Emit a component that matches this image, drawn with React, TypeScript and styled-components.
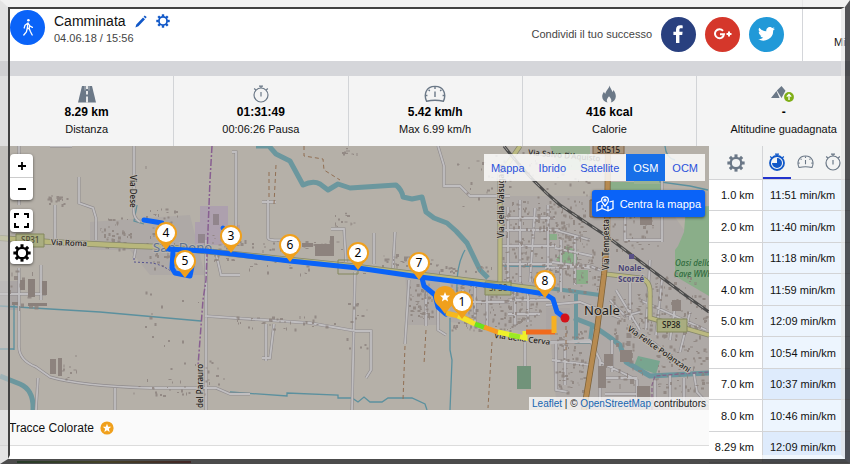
import React from "react";
import styled, { createGlobalStyle } from "styled-components";

const BLUE = "#0a63f8";
const ORANGE = "#f0a01c";

const GlobalStyle = createGlobalStyle`
  * { box-sizing: border-box; }
  body { margin: 0; background: #fff; color: #111; font-family: "Liberation Sans", Arial, sans-serif; font-size: 11px; line-height: 14px; }
  button { font: inherit; color: inherit; border: 0; padding: 0; background: none; cursor: pointer; }
  svg { display: block; flex: none; }
`;

const Page = styled.div`
  position: relative;
  display: flex;
  flex-direction: column;
  height: 100vh;
  min-height: 440px;
  overflow: hidden;
`;

const FrameOuter = styled.div`
  position: absolute;
  inset: 0;
  pointer-events: none;
  border-style: solid;
  border-width: 7px 5px 5px 8px;
  border-color: rgba(236, 236, 236, 0.75) rgba(40, 40, 44, 0.8) rgba(40, 40, 40, 0.83) rgba(205, 205, 205, 0.55);
`;

const FrameInner = styled.div`
  height: 100%;
  border-style: solid;
  border-width: 2px 4px 4px 2px;
  border-color: #414141 rgba(228, 228, 228, 0.6) rgba(255, 255, 255, 0.6) #414141;
`;

const Header = styled.header`
  display: flex;
  align-items: stretch;
  flex: none;
  height: 61px;
  padding-left: 10px;
`;

const Sport = styled.div`
  width: 35px;
  height: 35px;
  margin-top: 10px;
  border-radius: 50%;
  background: ${BLUE};
  display: grid;
  place-items: center;
`;

const Heading = styled.div`
  flex: 1;
  padding: 13px 0 0 9px;
`;

const TitleRow = styled.div`
  display: flex;
  align-items: center;
  gap: 9px;
`;

const Title = styled.h1`
  margin: 0;
  font-size: 14px;
  line-height: 16px;
  font-weight: 400;
`;

const IconButton = styled.button`
  display: grid;
  place-items: center;
  color: #1158c8;
`;

const DateLine = styled.div`
  margin-top: 2px;
  color: #444;
`;

const Share = styled.div`
  display: flex;
  align-items: center;
  gap: 9px;
  padding: 7px 18px 0 0;
  color: #444;
`;

const Round = styled.button<{ $bg: string }>`
  width: 35px;
  height: 35px;
  border-radius: 50%;
  background: ${(p) => p.$bg};
  display: grid;
  place-items: center;
  color: #fff;
`;

const HeaderEnd = styled.div`
  width: 48px;
  flex: none;
  overflow: hidden;
  border-left: 1px solid #d4d6da;
  padding: 35px 0 0 31px;
  white-space: nowrap;
`;

const Band = styled.div`
  flex: none;
  height: 15px;
  background: #d5d6da;
`;

const Stats = styled.section`
  flex: none;
  display: grid;
  grid-template-columns: repeat(5, 20.5%);
  height: 70px;
  background: #f4f4f4;
`;

const Stat = styled.div`
  display: flex;
  flex-direction: column;
  align-items: center;
  padding-top: 8px;
  border-right: 1px solid #d2d4d7;
  white-space: nowrap;
`;

const StatIcon = styled.div`
  display: grid;
  place-items: center;
  height: 20px;
  color: #6b7887;
`;

const StatValue = styled.strong`
  font-size: 12px;
  line-height: 16px;
  color: #000;
`;

const StatLabel = styled.span`
  margin-top: 2px;
  line-height: 14px;
`;

const Body = styled.main`
  flex: 1;
  min-height: 0;
  display: flex;
`;

const MapColumn = styled.div`
  flex: 1;
  min-width: 0;
  display: flex;
  flex-direction: column;
`;

const MapArea = styled.div`
  position: relative;
  flex: 1;
  min-height: 0;
  overflow: hidden;
  background: #b5b0a8;
`;

const MapSvg = styled.svg`
  width: 100%;
  height: 100%;
`;

const LeftControls = styled.div`
  position: absolute;
  left: 10px;
  top: 8px;
  display: flex;
  flex-direction: column;
  gap: 9px;
`;

const Control = styled.div`
  border-radius: 4px;
  background: #fff;
  box-shadow: 0 1px 3px rgba(0, 0, 0, 0.55);
  overflow: hidden;
`;

const ControlButton = styled.button`
  display: grid;
  place-items: center;
  width: 23px;
  height: 23px;
  color: #000;
  & + & { border-top: 1px solid #ccc; }
`;

const RightControls = styled.div`
  position: absolute;
  top: 8px;
  right: 4px;
  display: flex;
  flex-direction: column;
  align-items: flex-end;
  gap: 9px;
`;

const Layers = styled.div`
  display: flex;
  height: 27px;
  background: rgba(255, 255, 255, 0.82);
`;

const Layer = styled.button<{ $active?: boolean }>`
  padding: 0 7px;
  color: ${(p) => (p.$active ? "#fff" : "#2a52dc")};
  background: ${(p) => (p.$active ? "#176fe8" : "transparent")};
`;

const Center = styled.button`
  display: flex;
  align-items: center;
  gap: 6px;
  height: 27px;
  padding: 0 4px;
  border-radius: 3px;
  background: ${BLUE};
  color: #fff;
  box-shadow: 0 1px 3px rgba(0, 0, 0, 0.5);
  white-space: nowrap;
`;

const Attribution = styled.div`
  position: absolute;
  right: 0;
  bottom: 0;
  padding: 0 3px;
  background: rgba(255, 255, 255, 0.75);
  font-size: 10px;
  line-height: 13px;
  color: #222;
  a { color: #1565b0; text-decoration: none; }
`;

const Tracks = styled.div`
  flex: none;
  display: flex;
  align-items: center;
  gap: 6px;
  height: 36px;
  padding-left: 9px;
  border-bottom: 1px solid #dcdcdc;
  background: #fafafa;
  font-size: 12px;
`;

const LegendRow = styled.div`
  flex: none;
  display: flex;
  height: 18px;
  padding: 15px 20px 0 17px;
`;

const LegendBar = styled.div`
  width: 174px;
  height: 2px;
  background: linear-gradient(90deg, #1f9a2c, #d9c928, #c22020);
`;

const Side = styled.aside`
  flex: none;
  width: 141px;
  overflow: hidden;
`;

const Splits = styled.table`
  width: 141px;
  table-layout: fixed;
  border-collapse: separate;
  border-spacing: 0;
  th, td { padding: 0; border-bottom: 1px solid #d3d4d6; }
  thead tr { height: 34px; background: #f3f4f4; }
  tbody tr { height: 31px; }
  tbody tr:nth-child(even) { height: 32px; }
`;

const GearHead = styled.th`
  width: 53px;
  color: #6b7887;
  svg { margin: 0 auto; }
`;

const ModeHead = styled.th`
  border-left: 1px solid #d3d4d6;
`;

const Modes = styled.div`
  display: flex;
`;

const Mode = styled.button<{ $active?: boolean }>`
  display: grid;
  place-items: center;
  flex: none;
  width: 28px;
  height: 33px;
  color: ${(p) => (p.$active ? "#1158c8" : "#6b7887")};
  border-bottom: 2px solid ${(p) => (p.$active ? "#2233cc" : "transparent")};
`;

const Km = styled.th`
  font-weight: 400;
  text-align: right;
  && { padding-right: 8px; }
`;

const Pace = styled.td<{ $fast?: boolean }>`
  border-left: 1px solid #d3d4d6;
  background: ${(p) => (p.$fast ? "#deebfc" : "#edf5fe")};
  white-space: nowrap;
  && { padding-left: 7px; }
`;

/* ---------- icons ---------- */

const Gear = ({ size = 14 }: { size?: number }) => (
  <svg width={size} height={size} viewBox="0 0 20 20" fill="none" stroke="currentColor">
    <circle cx="10" cy="10" r="5.8" strokeWidth="2.5" />
    {[0, 45, 90, 135, 180, 225, 270, 315].map((a) => (
      <path key={a} d="M10 0.4V3.8" strokeWidth="3.4" transform={`rotate(${a} 10 10)`} />
    ))}
  </svg>
);

const Walker = () => (
  <svg width="14" height="19" viewBox="0 0 14 19" fill="none" stroke="#fff" strokeWidth="1.3" strokeLinecap="round" strokeLinejoin="round">
    <circle cx="7.4" cy="2.2" r="1.3" fill="#fff" stroke="none" />
    <path d="M7 5L4 7.2L3.2 10M7 5L9 8L11.4 9.4M7 5L6.2 10.5M8.6 7.5L8.2 10.5M6.2 10.5L5.4 13.8L2.8 17M8.2 10.5L9.4 13.5L11.2 17M6.2 10.5H8.2" />
  </svg>
);

const Pencil = () => (
  <svg width="12" height="13" viewBox="0 0 12 13" fill="currentColor">
    <path d="M9.7 0.4L11.7 2.1L10.6 3.5L8.6 1.8ZM8 2.5L10 4.2L3.4 11.2L0.4 12.6L1.3 9.5Z" />
  </svg>
);

const Stopwatch = ({ size = 18, filled }: { size?: number; filled?: boolean }) => (
  <svg width={size} height={size} viewBox="0 0 18 18" fill="none" stroke="currentColor" strokeWidth="1.2">
    <circle cx="9" cy="10" r="7" strokeWidth={filled ? 1.8 : 1.2} />
    <path d="M7 1.2H11M9 1.2V3M2.2 3.5L3.8 5M15.8 3.5L14.2 5" />
    {filled ? <path d="M9 10V5A5 5 0 1 1 4 10Z" fill="currentColor" stroke="none" /> : <path d="M9 7V11.4" />}
  </svg>
);

const Gauge = ({ size = 22 }: { size?: number }) => (
  <svg width={size} height={size * 0.8} viewBox="0 0 22 17.6" fill="none" stroke="currentColor" strokeWidth="1.4">
    <path d="M2.6 16.2C-0.4 10 1.6 1.4 11 1.4S22.4 10 19.4 16.2Q11 14.4 2.6 16.2Z" />
    <path d="M11 6.6V12M11 2V4M4.6 4.8L5.8 6M17.4 4.8L16.2 6M1.6 10.5H3.4M20.4 10.5H18.6" />
  </svg>
);

const Road = () => (
  <svg width="18" height="18" viewBox="0 0 18 18">
    <path d="M4 1H14L18 17.5H0Z" fill="#6b7887" />
    <path d="M9 1V4M9 6V9.5M9 11.5V17.5" stroke="#f4f4f4" strokeWidth="1.8" />
    <path d="M7 0.5V5.5M11 0.5V5.5" stroke="#f4f4f4" strokeWidth="0.5" />
  </svg>
);

const Flame = () => (
  <svg width="14" height="18" viewBox="0 0 14 18">
    <path d="M7.6 0.5C8.2 3.5 10 4.6 10.4 7C10.9 6.6 11.2 5.8 11.3 5C13 7 14 9.2 13.8 11.8C13.6 14.6 11.6 16.8 8.8 17.5C10 15.8 9.4 13.7 7 11.2C5 13.4 4.1 15.6 5.5 17.5C2.4 16.8 0.3 14.7 0.2 11.8C0.1 9.7 1.1 8 2 6.8C2.2 7.8 2.7 8.5 3.4 8.8C3.6 5.8 6.9 3.8 7.6 0.5Z" fill="#6b7887" />
  </svg>
);

const Mountains = () => (
  <svg width="26" height="18" viewBox="0 0 26 18">
    <path d="M0 13L5.5 6L8.6 13ZM5.9 5.4L10.5 1L14.5 5.8L10.5 13Z" fill="#6b7887" />
    <circle cx="18" cy="12" r="4.9" fill="#7fae16" />
    <path d="M18 15V9.5M15.8 11.6L18 9.4L20.2 11.6" stroke="#fff" strokeWidth="1.3" fill="none" />
  </svg>
);

const Facebook = () => (
  <svg width="11" height="18" viewBox="0 0 11 18">
    <path d="M3 18V10H0.4V6.8H3V4.5C3 1.7 4.7 0.2 7.2 0.2C8.4 0.2 9.4 0.3 9.7 0.4V3.3H8C6.7 3.3 6.4 3.9 6.4 4.9V6.8H9.6L9.2 10H6.4V18Z" fill="#fff" />
  </svg>
);

const GooglePlus = () => (
  <svg width="18" height="12" viewBox="0 0 18 12" fill="none" stroke="#fff" strokeWidth="2">
    <path d="M9 2.8A4.5 4.5 0 1 0 10 6.2H6M12.5 6H17.5M15 3.5V8.5" />
  </svg>
);

const Twitter = () => (
  <svg width="17" height="14" viewBox="0 0 24 20">
    <path d="M24 2.4a9.8 9.8 0 0 1-2.8.8A4.9 4.9 0 0 0 23.3.4a9.9 9.9 0 0 1-3.1 1.2A4.9 4.9 0 0 0 11.8 6.1 14 14 0 0 1 1.7.9a4.9 4.9 0 0 0 1.5 6.6A4.9 4.9 0 0 1 1 6.9a4.9 4.9 0 0 0 3.9 4.9 4.9 4.9 0 0 1-2.2.1 4.9 4.9 0 0 0 4.600 3.400A9.900 9.900 0 0 1 0 17.300 14 14 0 0 0 21.500 4.900 10 10 0 0 0 24 2.400z" fill="#fff" />
  </svg>
);

const STAR = "M0 -5L1.4 -1.6L5 -1.4L2.2 1L3.1 4.6L0 2.6L-3.1 4.6L-2.2 1L-5 -1.4L-1.4 -1.6Z";

const StarBadge = () => (
  <svg width="14" height="14" viewBox="-7 -7 14 14">
    <circle r="6.6" fill={ORANGE} />
    <path d={STAR} fill="#fff" transform="scale(0.85)" />
  </svg>
);

const Plus = () => (
  <svg width="10" height="10" viewBox="0 0 10 10" stroke="#000" strokeWidth="1.8"><path d="M1 5H9M5 1V9" /></svg>
);
const Minus = () => (
  <svg width="10" height="10" viewBox="0 0 10 10" stroke="#000" strokeWidth="1.8"><path d="M1 5H9" /></svg>
);
const Expand = () => (
  <svg width="15" height="15" viewBox="0 0 15 15" fill="none" stroke="#000" strokeWidth="2">
    <path d="M1 5V1H5M10 1H14V5M14 10V14H10M5 14H1V10" />
  </svg>
);
const MapPinIcon = () => (
  <svg width="18" height="16" viewBox="0 0 18 16" fill="none" stroke="#fff" strokeWidth="1.3">
    <path d="M5 5L1 7V14.8L6 12.5L12 14.8L17 12.5V5L13.5 6M6 9V12.5M12 10V14.8" />
    <path d="M9 10C6.5 7 5.6 5.8 5.6 4.2A3.4 3.4 0 0 1 12.4 4.2C12.4 5.8 11.5 7 9 10Z" />
    <circle cx="9" cy="4.2" r="1" />
  </svg>
);

/* ---------- map drawing ---------- */

function scatter(seed: number, x0: number, y0: number, w: number, h: number, n: number, max = 3) {
  let s = seed * 7919;
  const rnd = () => ((s = (s * 16807) % 2147483647) / 2147483647);
  rnd();
  let d = "";
  for (let i = 0; i < n; i++) {
    const x = Math.round((x0 + rnd() * w) * 2) / 2;
    const y = Math.round((y0 + rnd() * h) * 2) / 2;
    const bw = 1 + Math.round(rnd() * (max - 1));
    const bh = 1 + Math.round(rnd() * (max - 1));
    d += `M${x} ${y}h${bw}v${bh}h${-bw}z`;
  }
  return d;
}

const HOUSES = [
  scatter(11, 502, 200, 80, 84, 210), scatter(23, 508, 284, 32, 44, 70), scatter(35, 450, 278, 60, 52, 140),
  scatter(47, 550, 236, 48, 60, 90), scatter(59, 555, 330, 30, 62, 80), scatter(61, 608, 200, 50, 50, 50),
  scatter(73, 612, 292, 40, 44, 70), scatter(85, 652, 270, 56, 58, 90), scatter(97, 600, 332, 50, 62, 30, 5),
  scatter(101, 655, 330, 54, 62, 100), scatter(113, 535, 205, 60, 30, 30, 4), scatter(121, 495, 150, 95, 50, 40),
  scatter(137, 100, 215, 30, 34, 45), scatter(149, 150, 208, 34, 60, 50), scatter(151, 212, 232, 25, 30, 30),
  scatter(163, 235, 240, 110, 10, 30), scatter(171, 246, 262, 120, 12, 20), scatter(183, 382, 254, 50, 12, 40),
  scatter(197, 408, 282, 24, 38, 60), scatter(203, 130, 378, 80, 18, 26), scatter(211, 165, 360, 60, 28, 14),
  scatter(223, 235, 315, 100, 14, 36), scatter(235, 10, 268, 25, 40, 14, 5), scatter(241, 335, 212, 20, 16, 14),
  scatter(257, 47, 195, 20, 9, 16), scatter(263, 60, 355, 16, 25, 10), scatter(271, 345, 300, 22, 60, 14),
  scatter(283, 452, 160, 46, 46, 18), scatter(297, 335, 148, 26, 8, 10), scatter(301, 130, 290, 70, 60, 9),
  scatter(311, 145, 150, 10, 180, 9), scatter(331, 418, 264, 80, 8, 26),
].join("");

const MINOR = [
  "M134 146V205Q132 218 140 222", "M79 177V203L93 208L96 218V240", "M55 205V240", "M236 240V152L232 152",
  "M19 146V205M50 146H72", "M268 200V238Q268 241 285 240", "M262 202H276", "M331 229H344L346 262",
  "M374 233V264M395 232L393 268", "M438 146L444 166V186H460L470 196H510", "M19 268V345Q18 360 36 367L50 377Q80 386 150 388H216L230 394H250",
  "M38 378L36 410M115 388V410", "M0 294H46M41 265V300", "M206 240V410", "M216 253L221 275L240 275", "M205 316L310 323L356 331H371V370L366 378",
  "M266 324V361M274 324L270 358H262", "M355 272L352 410", "M409 280L405 344M426 286V326", "M438 297V330L446 335",
  "M134 258L136 247", "M508 207V282M500 218H555M503 230H560M500 246H556M503 264H552M520 200V282M535 208L530 282M548 205V282",
  "M555 230L590 240M555 248L592 256M552 262L590 268M561 240V292M575 236V285", "M545 268L590 266L600 270",
  "M515 290V326M528 292V322M508 300H550M508 314H540M475 285V326M487 286V327M463 290V320M450 302H510",
  "M525 333V366", "M550 342H590M556 343V390L568 392M565 345V385M552 360L590 365", "M590 340L600 360V408",
  "M600 362L637 380V404M612 340V372M600 378H637M605 394H640", "M610 300L625 316L640 312M616 290L640 330M630 280V320",
  "M625 190V240H662M662 176V242M662 205H686", "M650 260L646 330M662 280L656 335M676 300L670 340M690 312L680 352M640 300L706 330",
  "M694 374L697 392L709 405M650 340L690 372M655 380V408M670 375V408M684 378V408", "M546 305L580 302L620 318",
].join("");

const RIVER = "M256 146H269L276 154L290 161L303 185Q313 180 320 184L328 190L338 184L350 188L396 185Q402 190 403 197L412 199L422 197L426 212L434 218L447 223L456 231L467 243L480 270L488 278";
const MAIN_ROAD = "M0 238L50 242L135 246L165 247L350 266L545 290";
const SIDE_ROADS = "M500 282V175L520 146M605 274L640 278Q650 280 650 292V318L709 335";
const SR515 = "M608 146L607 240L604 275L597 330L584 410";
const RAIL = "M504 146Q530 180 560 205Q585 222 605 235L685 295L709 312";

const Pin = ({ x, y, n }: { x: number; y: number; n?: string }) => (
  <g transform={`translate(${x} ${y})`}>
    <path d="M-10 4L0 17L10 4Z" fill={ORANGE} />
    <circle r="11" fill={ORANGE} />
    {n ? <circle r="9" fill="#fff" /> : <path d={STAR} fill="#fff" />}
    {n && (
      <text y="4" textAnchor="middle" fontFamily="Noto Sans, sans-serif" fontSize="12" fill="#000">{n}</text>
    )}
  </g>
);

const halo = { stroke: "#b9b4ad", strokeWidth: 2, paintOrder: "stroke" as const };

const MapDrawing = () => (
  <MapSvg viewBox="0 146 709 264" preserveAspectRatio="xMinYMin slice" aria-label="Mappa" role="img" fill="none">
    <rect y="146" width="709" height="264" fill="#b5b0a8" />
    <g fill="#aea9a6">
      <path d="M500 196H660L709 265V410H590L556 400L550 334L450 322V278L500 280Z" />
      <path d="M90 222L190 215L205 275H150L130 250H90ZM405 270H440V325H408Z" />
    </g>
    <path d="M200 206H228V225H240V245H195V222H200Z" fill="#ada0ae" />
    <path d="M213 214H219V225H213ZM198 234H205V243H198Z" fill="#91858c" />
    <g fill="#8aae89">
      <path d="M709 206L686 208L684 232L678 246L675 250V276L709 296ZM561 252L567 246L577 251V264H562L556 260Z" />
      <path d="M517 366H531V389H517Z" fill="#71937a" />
      <path d="M638 356L660 361L656 374L634 366Z" fill="#78a58f" />
      <path d="M610 182H662V196H610ZM574 270H588V284H574ZM548 234H557V240H548Z" />
      <path d="M550 146H590V170H560ZM634 170H662V184H634Z" fill="#9ab294" />
    </g>
    <path d="M0 281H20V310H0ZM546 308H570V330H546Z" fill="#aaa5a4" />

    <g stroke="#6b979e" strokeWidth="5" strokeLinejoin="round">
      <path d={RIVER} />
      <path d="M0 376L20 384Q34 390 33 410" />
      <path d="M574 318L592 325L608 336L620 345L626 362L650 376L709 373" />
      <path d="M576 294V342H590L592 326M548 288L600 295" strokeWidth="4" />
    </g>
    <g stroke="#5b909e" strokeWidth="1.3">
      <path d="M0 306L100 312L201 321M14 304V350M0 349H14M230 392L287 396V393L338 395V398H352L358 402L364 397L370 402H382L388 398H412L425 404L427 410" />
      <path d="M450 318V350L452 360L450 410M465 250Q456 265 457 292M504 266L575 267M660 172V182L690 186L708 190M137 205L134 221L144 224M665 146Q666 158 675 160" />
    </g>

    <path d={MINOR} stroke="#8f8b8d" strokeWidth="3" />
    <path d={MINOR} stroke="#c0bec0" strokeWidth="1.8" />
    <path d={HOUSES} fill="#8b817c" opacity="0.8" />
    <path d="M50 359H56V374H50ZM58 358H62V376H58ZM315 244H330V236H334V256H315ZM302 243H313V247H302ZM604 354H613V366H604ZM620 350H632V362H620ZM637 386H650V400H637ZM672 300H681V311H672ZM598 366H606V388H598ZM640 212H652V225H640Z" fill="#8d837e" />
    <path d="M20 280H25V290H20ZM28 279H35V297H28ZM42 281H47V295H42ZM28 303H47V306H28ZM12 302H18V305H12Z" fill="#8a807b" />

    <path d={MAIN_ROAD} stroke="#85866a" strokeWidth="6" />
    <path d={MAIN_ROAD} stroke="#b8b77c" strokeWidth="4.6" />
    <path d={SIDE_ROADS} stroke="#85866a" strokeWidth="5" />
    <path d={SIDE_ROADS} stroke="#bbb980" strokeWidth="3.6" />
    <path d="M550 343L590 340" stroke="#bab8b9" strokeWidth="2.5" />
    <path d={SR515} stroke="#7d6138" strokeWidth="6" />
    <path d={SR515} stroke="#b78b51" strokeWidth="4.5" />
    <path d={RAIL} stroke="#4b4b4b" strokeWidth="3" />
    <path d={RAIL} stroke="#a5a29e" strokeWidth="1" strokeDasharray="6 6" />
    <path d="M212 146L210 180L206 280L203 300L198 366" stroke="#885f91" strokeWidth="1.5" strokeDasharray="7 2 2 2" />
    <path d="M652 410V385L655 376L680 374L709 372" stroke="#856488" strokeWidth="1.2" strokeDasharray="4 2" />
    <path d="M134 258V262L152 263Q163 265 172 272" stroke="#545291" strokeDasharray="2 2" />
    <path d="M304 146V156L323 159L324 170L340 180M276 165L274 204M269 172V200M405 346L403 400M426 330L424 364M492 342L488 408M566 326V350" stroke="#916f53" strokeDasharray="4 3" />

    <g fill="#a9ad80" stroke="#83875c">
      <path d="M16 234H44V247H16Z" />
      <path d="M485 282H511V295H485ZM657 319H687V332H657Z" />
      <path d="M593 142H624V154H593ZM590 200H625V217H590Z" fill="#aa957c" stroke="#7f6248" />
      <path d="M338 260H358V274H338Z" fill="none" />
    </g>

    <g fontFamily="Noto Sans, sans-serif" fontSize="8" fontWeight="500" fill="#1f1c19">
      <text x="21" y="243" fill="#4c4a35">SP31</text>
      <text x="51" y="245" transform="rotate(2 51 245)" {...halo}>Via Roma</text>
      <text transform="translate(130 175) rotate(90)" {...halo}>Via Dese</text>
      <text transform="translate(203 408) rotate(-90)" {...halo}>del Parauro</text>
      <text transform="translate(504 238) rotate(-90)" {...halo}>Via della Valsugana</text>
      <text transform="translate(609 270) rotate(-90)" {...halo}>Via Tempesta</text>
      <text x="597" y="153">SR515</text>
      <text x="489" y="291" fill="#4c4a35">SP38</text>
      <text x="662" y="328">SP38</text>
      <text transform="translate(528 155) rotate(5)">Via Salvo D'Aquisto</text>
      <text transform="translate(494 338) rotate(7)" {...halo}>Via della Cerva</text>
      <text transform="translate(627 330) rotate(35)" {...halo}>Via Felice Polanzani</text>
      <text textAnchor="middle" fill="#4b4678" fontWeight="700" {...halo}>
        <tspan x="631" y="271">Noale-</tspan><tspan x="631" dy="11">Scorzé</tspan>
      </text>
      <text fill="#2f6b3d" fontStyle="italic"><tspan x="675" y="266">Oasi della</tspan><tspan x="674" dy="11">Cave WWF</tspan></text>
      <text x="153" y="252" fontSize="13" fontWeight="400" fill="#5f7390" {...halo}>San Dono</text>
      <text x="584" y="315" fontSize="13" fontWeight="400" {...halo}>Noale</text>
    </g>
    <path d="M629 254H634V259H629Z" fill="#595087" />

    <g stroke={BLUE} strokeLinejoin="round" strokeLinecap="round">
      <path d="M144 220L162 223L168 249L205 251L232 254L290 261L358 268L420 277L500 287L545 294L553 299L557 312L565 318" strokeWidth="5" />
      <path d="M173 251L172 268L175 273L190 276L192 266L187 262M422 278L424 286L435 295L438 307L446 314" strokeWidth="5" />
      <circle cx="223" cy="228" r="2" fill={BLUE} />
    </g>
    <g strokeWidth="5">
      <path d="M446 313L463 317L472 322" stroke="#f7b81d" />
      <path d="M458 316L475 324" stroke="#f4e32a" />
      <path d="M475 324L486 328" stroke="#6be31c" />
      <path d="M484 327L500 333" stroke="#f79a22" />
      <path d="M498 332L525 338V331" stroke="#eff02a" />
      <path d="M509 335L520 337" stroke="#9bea24" />
      <path d="M526 332H555" stroke="#f16b1d" />
      <path d="M554 333V316" stroke="#f7b022" />
    </g>
    <circle cx="565" cy="318" r="4.5" fill="#d3121a" />
    <Pin x={231} y={236} n="3" />
    <Pin x={166} y={233} n="4" />
    <Pin x={185} y={261} n="5" />
    <Pin x={290} y={245} n="6" />
    <Pin x={358} y={253} n="2" />
    <Pin x={419} y={263} n="7" />
    <Pin x={545} y={281} n="8" />
    <Pin x={445} y={297} />
    <Pin x={462} y={302} n="1" />
  </MapSvg>
);

/* ---------- data ---------- */

const STATS = [
  { icon: <Road />, value: "8.29 km", label: "Distanza" },
  { icon: <Stopwatch />, value: "01:31:49", label: "00:06:26 Pausa" },
  { icon: <Gauge />, value: "5.42 km/h", label: "Max 6.99 km/h" },
  { icon: <Flame />, value: "416 kcal", label: "Calorie" },
  { icon: <Mountains />, value: "-", label: "Altitudine guadagnata" },
];

const LAYERS = ["Mappa", "Ibrido", "Satellite", "OSM", "OCM"];

const SPLITS: [string, string, boolean?][] = [
  ["1.0 km", "11:51 min/km"],
  ["2.0 km", "11:40 min/km"],
  ["3.0 km", "11:18 min/km"],
  ["4.0 km", "11:59 min/km"],
  ["5.0 km", "12:09 min/km"],
  ["6.0 km", "10:54 min/km"],
  ["7.0 km", "10:37 min/km", true],
  ["8.0 km", "10:46 min/km"],
  ["8.29 km", "12:09 min/km", true],
];

export default function App() {
  return (
    <Page>
      <GlobalStyle />
      <Header>
        <Sport><Walker /></Sport>
        <Heading>
          <TitleRow>
            <Title>Camminata</Title>
            <IconButton aria-label="Modifica"><Pencil /></IconButton>
            <IconButton aria-label="Impostazioni"><Gear size={14} /></IconButton>
          </TitleRow>
          <DateLine>04.06.18 / 15:56</DateLine>
        </Heading>
        <Share>
          <span>Condividi il tuo successo</span>
          <Round $bg="#29407f" aria-label="Facebook"><Facebook /></Round>
          <Round $bg="#d5372b" aria-label="Google+"><GooglePlus /></Round>
          <Round $bg="#2199d8" aria-label="Twitter"><Twitter /></Round>
        </Share>
        <HeaderEnd>Mi</HeaderEnd>
      </Header>
      <Band />
      <Stats>
        {STATS.map((s) => (
          <Stat key={s.label}>
            <StatIcon>{s.icon}</StatIcon>
            <StatValue>{s.value}</StatValue>
            <StatLabel>{s.label}</StatLabel>
          </Stat>
        ))}
      </Stats>
      <Body>
        <MapColumn>
          <MapArea>
            <MapDrawing />
            <LeftControls>
              <Control>
                <ControlButton aria-label="Ingrandisci"><Plus /></ControlButton>
                <ControlButton aria-label="Riduci"><Minus /></ControlButton>
              </Control>
              <Control><ControlButton aria-label="Schermo intero"><Expand /></ControlButton></Control>
              <Control><ControlButton aria-label="Opzioni mappa"><Gear size={18} /></ControlButton></Control>
            </LeftControls>
            <RightControls>
              <Layers>
                {LAYERS.map((l) => (
                  <Layer key={l} $active={l === "OSM"}>{l}</Layer>
                ))}
              </Layers>
              <Center><MapPinIcon />Centra la mappa</Center>
            </RightControls>
            <Attribution>
              <a href="#leaflet">Leaflet</a> | © <a href="#osm">OpenStreetMap</a> contributors
            </Attribution>
          </MapArea>
          <Tracks>Tracce Colorate <StarBadge /></Tracks>
          <LegendRow><LegendBar /></LegendRow>
        </MapColumn>
        <Side>
          <Splits>
            <thead>
              <tr>
                <GearHead><Gear size={18} /></GearHead>
                <ModeHead>
                  <Modes>
                    <Mode $active aria-label="Passo"><Stopwatch filled /></Mode>
                    <Mode aria-label="Velocità"><Gauge size={17} /></Mode>
                    <Mode aria-label="Durata"><Stopwatch /></Mode>
                  </Modes>
                </ModeHead>
              </tr>
            </thead>
            <tbody>
              {SPLITS.map(([km, pace, fast]) => (
                <tr key={km}>
                  <Km scope="row">{km}</Km>
                  <Pace $fast={fast}>{pace}</Pace>
                </tr>
              ))}
            </tbody>
          </Splits>
        </Side>
      </Body>
      <FrameOuter><FrameInner /></FrameOuter>
    </Page>
  );
}
